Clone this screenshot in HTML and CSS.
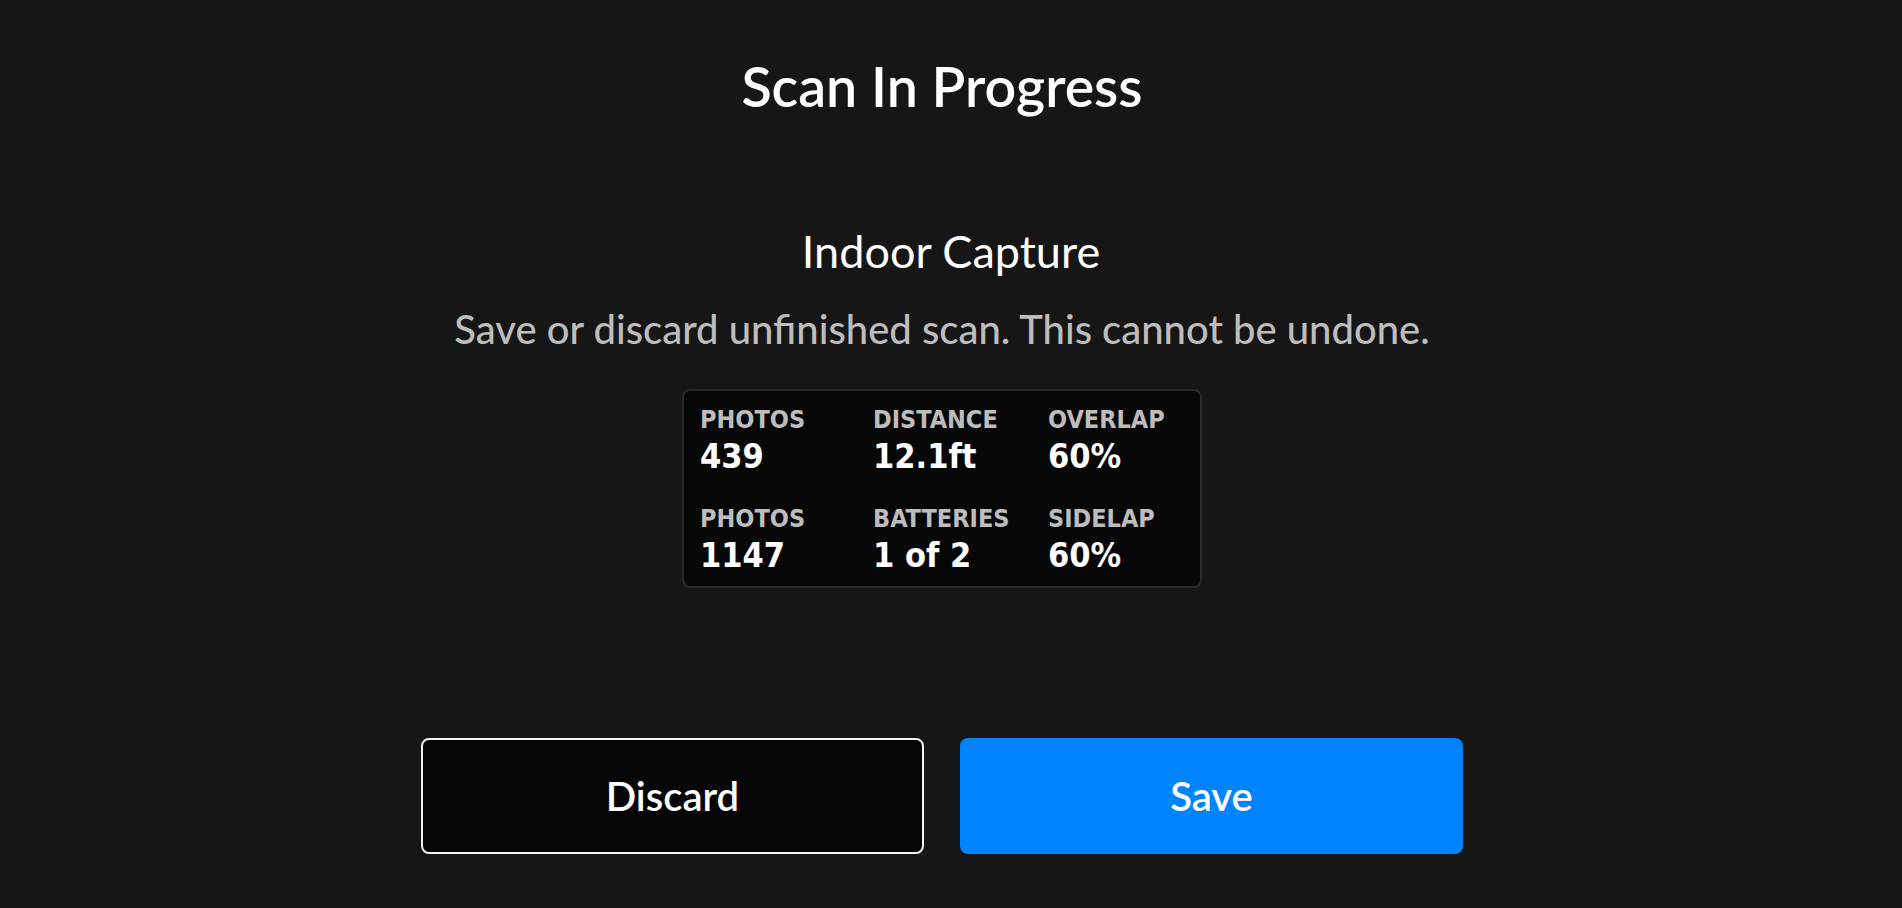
FILE: index.html
```html
<!DOCTYPE html>
<html lang="en">
<head>
<meta charset="utf-8">
<title>Scan In Progress</title>
<link rel="stylesheet" href="styles.css">
</head>
<body>
<main class="page">
  <h1 class="title">Scan In Progress</h1>
  <h2 class="subtitle">Indoor Capture</h2>
  <p class="note">Save or discard unfinished scan. This cannot be undone.</p>
  <section class="stats">
    <div class="stat"><div class="label">PHOTOS</div><div class="value">439</div></div>
    <div class="stat"><div class="label">DISTANCE</div><div class="value">12.1ft</div></div>
    <div class="stat"><div class="label">OVERLAP</div><div class="value">60%</div></div>
    <div class="stat"><div class="label">PHOTOS</div><div class="value">1147</div></div>
    <div class="stat"><div class="label">BATTERIES</div><div class="value">1 of 2</div></div>
    <div class="stat"><div class="label">SIDELAP</div><div class="value">60%</div></div>
  </section>
  <div class="actions">
    <button class="btn btn-discard">Discard</button>
    <button class="btn btn-save">Save</button>
  </div>
</main>
</body>
</html>
```
FILE: styles.css
```css
html, body {
  margin: 0;
  padding: 0;
  background: #161616;
  height: 100%;
}
body {
  font-family: Lato, "Noto Sans", sans-serif;
  color: #ffffff;
  overflow: hidden;
}
.page {
  display: flex;
  flex-direction: column;
  align-items: center;
  padding-right: 18px;
}
.title {
  margin: 56px 0 0;
  font-size: 55.5px;
  line-height: 60px;
  font-weight: 600;
}
.subtitle {
  margin: 109px 0 0 18px;
  font-size: 45px;
  line-height: 52px;
  font-weight: 400;
}
.note {
  margin: 29px 0 0;
  font-size: 40px;
  line-height: 46px;
  color: #bdbdbd;
  font-weight: 500;
}
.stats {
  margin-top: 37px;
  width: 520px;
  box-sizing: border-box;
  background: #070707;
  border: 2px solid #2a2a2a;
  border-radius: 8px;
  padding: 15px 0 12px 16px;
  display: grid;
  grid-template-columns: 173px 175px auto;
  row-gap: 30px;
  font-family: "DejaVu Sans Condensed", "DejaVu Sans", sans-serif;
  font-weight: 700;
}
.label {
  font-size: 25px;
  line-height: 28px;
  color: #bdbdbd;
}
.value {
  margin-top: 3px;
  font-size: 34px;
  line-height: 38px;
  color: #ffffff;
}
.actions {
  margin-top: 150px;
  display: flex;
  gap: 36px;
}
.btn {
  width: 503px;
  height: 116px;
  box-sizing: border-box;
  border-radius: 8px;
  font-family: Lato, "Noto Sans", sans-serif;
  font-size: 40px;
  font-weight: 600;
  color: #ffffff;
  cursor: pointer;
}
.btn-discard {
  background: #050505;
  border: 2px solid #f2f2f2;
}
.btn-save {
  background: #0083ff;
  border: none;
}
```
